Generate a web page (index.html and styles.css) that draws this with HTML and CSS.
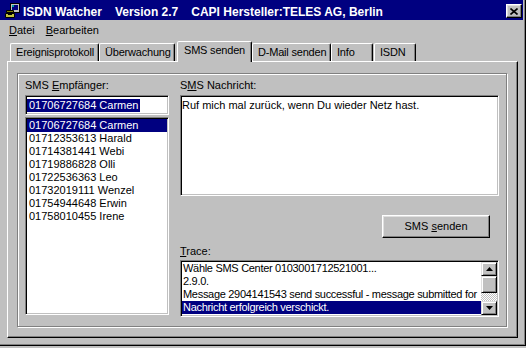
FILE: index.html
```html
<!DOCTYPE html>
<html lang="de">
<head>
    <meta charset="UTF-8">
    <title>ISDN Watcher</title>
    <link rel="stylesheet" href="styles.css">
</head>
<body>
    <div class="window">
        <div class="titlebar">
            <svg class="app-icon" width="16" height="16" viewBox="0 0 16 16">
                <rect x="6.5" y="1.5" width="9" height="9" fill="#c0c0c0" stroke="#000"/>
                <rect x="8" y="3" width="6" height="5" fill="#000080"/>
                <rect x="8" y="3" width="2" height="2" fill="#00a0a0"/>
                <path d="M2.5 8.5h7v2h-7z" fill="#808000" stroke="#000"/>
                <path d="M1.5 11.5h9v4h-9z" fill="#c0c040" stroke="#000"/>
                <rect x="4" y="12" width="4" height="1" fill="#000"/>
            </svg>
            <div class="title">
                <span>ISDN Watcher</span>
                <span>Version 2.7</span>
                <span>CAPI Hersteller:TELES AG, Berlin</span>
            </div>
            <div class="close-btn">
                <svg width="8" height="7" viewBox="0 0 8 7">
                    <path d="M0.5 0.5L7.5 6.5M7.5 0.5L0.5 6.5" stroke="#000" stroke-width="1.6"/>
                </svg>
            </div>
        </div>
        <div class="menubar">
            <span><u>D</u>atei</span>
            <span><u>B</u>earbeiten</span>
        </div>
        <div class="tabs">
            <div class="tab tab-events">Ereignisprotokoll</div>
            <div class="tab tab-watch">Überwachung</div>
            <div class="tab tab-sms active">SMS senden</div>
            <div class="tab tab-mail">D-Mail senden</div>
            <div class="tab tab-info">Info</div>
            <div class="tab tab-isdn">ISDN</div>
        </div>
        <div class="page">
            <div class="group">
                <div class="col-left">
                    <div class="caption">SMS <u>E</u>mpfänger:</div>
                    <div class="edit sunken"><span class="sel">01706727684 Carmen</span></div>
                    <div class="listbox sunken">
                        <div class="item selected">01706727684 Carmen</div>
                        <div class="item">01712353613 Harald</div>
                        <div class="item">01714381441 Webi</div>
                        <div class="item">01719886828 Olli</div>
                        <div class="item">01722536363 Leo</div>
                        <div class="item">01732019111 Wenzel</div>
                        <div class="item">01754944648 Erwin</div>
                        <div class="item">01758010455 Irene</div>
                    </div>
                </div>
                <div class="col-right">
                    <div class="caption">S<u>M</u>S Nachricht:</div>
                    <div class="message sunken">Ruf mich mal zurück, wenn Du wieder Netz hast.</div>
                    <div class="button">SMS <u>s</u>enden</div>
                    <div class="caption trace-caption"><u>T</u>race:</div>
                    <div class="trace sunken">
                        <div class="trace-lines">
                            <div class="item">Wähle SMS Center 0103001712521001...</div>
                            <div class="item">2.9.0.</div>
                            <div class="item">Message 2904141543 send successful - message submitted for</div>
                            <div class="item selected">Nachricht erfolgreich verschickt.</div>
                        </div>
                        <div class="scrollbar">
                            <div class="sb-btn raised">
                                <svg width="7" height="4" viewBox="0 0 7 4"><polygon points="3.5,0 7,4 0,4" fill="#000"/></svg>
                            </div>
                            <div class="sb-thumb raised"></div>
                            <div class="sb-track"></div>
                            <div class="sb-btn raised">
                                <svg width="7" height="4" viewBox="0 0 7 4"><polygon points="0,0 7,0 3.5,4" fill="#000"/></svg>
                            </div>
                        </div>
                    </div>
                </div>
            </div>
        </div>
    </div>
</body>
</html>
```

FILE: styles.css
```css
body {
    margin: 0;
    background: #c0c0c0;
    font-family: "Liberation Sans", Arial, sans-serif;
    font-size: 11px;
    line-height: 13px;
    color: #000;
}
.window {
    width: 526px;
    height: 346px;
    box-sizing: border-box;
    border-right: 1px solid #000;
    border-bottom: 1px solid #000;
    box-shadow: inset -1px -1px #808080;
    display: flex;
    flex-direction: column;
}
.titlebar {
    height: 20px;
    margin-right: 2px;
    background: #000080;
    color: #fff;
    display: flex;
    align-items: flex-start;
    flex-shrink: 0;
}
.app-icon {
    margin: 2px 3px 0 4px;
    flex-shrink: 0;
}
.title {
    flex-grow: 1;
    display: flex;
    gap: 13px;
    padding-top: 4px;
    font-size: 12px;
    line-height: 16px;
    font-weight: bold;
    white-space: nowrap;
}
.close-btn {
    width: 16px;
    height: 14px;
    margin: 4px 1px 0 0;
    box-sizing: border-box;
    background: #c0c0c0;
    border: 1px solid;
    border-color: #fff #000 #000 #fff;
    box-shadow: inset -1px -1px #808080, inset 1px 1px #dfdfdf;
    display: flex;
    align-items: center;
    justify-content: center;
}
.menubar {
    height: 20px;
    box-sizing: border-box;
    padding: 4px 0 0 9px;
    display: flex;
    gap: 11px;
    flex-shrink: 0;
}
.tabs {
    height: 21px;
    padding-left: 10px;
    display: flex;
    align-items: flex-end;
    flex-shrink: 0;
}
.tab {
    height: 18px;
    box-sizing: border-box;
    padding: 2px 0 0 5px;
    border: 1px solid;
    border-bottom: none;
    border-color: #fff #000 transparent #fff;
    border-radius: 2px 2px 0 0;
    box-shadow: inset -1px 0 #808080;
    letter-spacing: -0.2px;
    white-space: nowrap;
}
.tab.active {
    height: 21px;
    margin-bottom: -1px;
    padding-left: 6px;
    background: #c0c0c0;
    position: relative;
    z-index: 1;
}
.tab-events { width: 89px; }
.tab-watch { width: 76px; }
.tab-sms { width: 75px; margin-left: 2px; }
.tab-mail { width: 79px; }
.tab-info { width: 42px; }
.tab-isdn { width: 42px; margin-left: 1px; }
.page {
    width: 511px;
    height: 277px;
    margin-left: 7px;
    box-sizing: border-box;
    border: 1px solid;
    border-color: #fff #000 #000 #fff;
    box-shadow: inset -1px -1px #808080;
    padding: 11px 0 0 9px;
    flex-shrink: 0;
}
.group {
    width: 490px;
    height: 254px;
    box-sizing: border-box;
    border: 1px solid #808080;
    box-shadow: 1px 1px #fff, inset 1px 1px #fff;
    padding: 5px 0 0 7px;
    display: flex;
    gap: 11px;
}
.col-left {
    width: 144px;
    display: flex;
    flex-direction: column;
}
.col-right {
    width: 319px;
    display: flex;
    flex-direction: column;
}
.caption {
    height: 13px;
    white-space: nowrap;
}
.sunken {
    box-sizing: border-box;
    background: #fff;
    border: 1px solid;
    border-color: #808080 #fff #fff #808080;
    box-shadow: inset 1px 1px #000, inset -1px -1px #c0c0c0;
}
.raised {
    box-sizing: border-box;
    background: #c0c0c0;
    border: 1px solid;
    border-color: #dfdfdf #000 #000 #dfdfdf;
    box-shadow: inset 1px 1px #fff, inset -1px -1px #808080;
}
.edit {
    height: 20px;
    margin-top: 3px;
    padding: 3px 0 0 1px;
    white-space: nowrap;
    overflow: hidden;
}
.sel {
    display: inline-block;
    padding: 0 2px;
    background: #000080;
    color: #fff;
}
.listbox {
    height: 198px;
    margin-top: 2px;
    padding: 1px;
}
.item {
    height: 13px;
    padding-left: 2px;
    white-space: nowrap;
}
.item.selected {
    background: #000080;
    color: #fff;
}
.message {
    height: 101px;
    margin-top: 3px;
    padding: 3px 1px;
}
.button {
    align-self: flex-end;
    width: 108px;
    height: 23px;
    margin: 19px 9px 0 0;
    box-sizing: border-box;
    padding-top: 4px;
    text-align: center;
    border: 1px solid;
    border-color: #fff #000 #000 #fff;
    box-shadow: inset -1px -1px #808080, inset 1px 1px #dfdfdf;
}
.trace-caption {
    margin-top: 7px;
}
.trace {
    height: 57px;
    margin-top: 2px;
    padding: 1px;
    display: flex;
}
.trace-lines {
    flex-grow: 1;
    overflow: hidden;
}
.trace-lines .item {
    padding-left: 1px;
    letter-spacing: -0.3px;
}
.scrollbar {
    width: 16px;
    display: flex;
    flex-direction: column;
    flex-shrink: 0;
}
.sb-btn {
    height: 14px;
    display: flex;
    align-items: center;
    justify-content: center;
}
.sb-thumb {
    height: 17px;
}
.sb-track {
    flex-grow: 1;
    background: repeating-conic-gradient(#fff 0 25%, #c0c0c0 0 50%) 0 0 / 2px 2px;
}
```
